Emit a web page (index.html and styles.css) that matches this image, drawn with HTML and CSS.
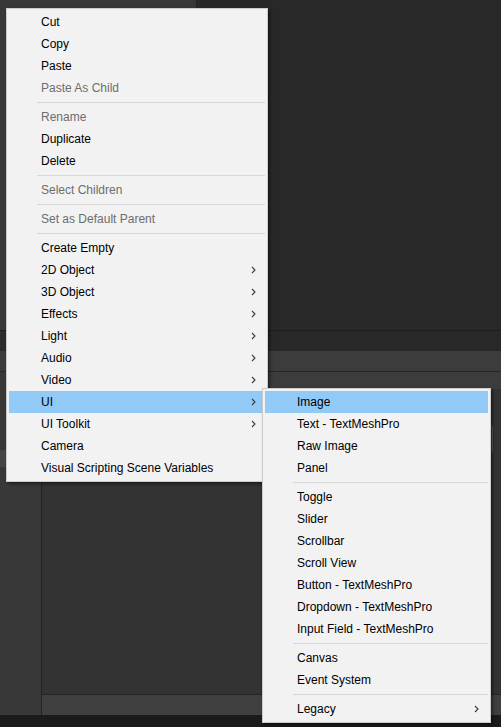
FILE: index.html
```html
<!DOCTYPE html>
<html>
<head>
<meta charset="utf-8">
<link rel="stylesheet" href="styles.css">
</head>
<body>
<div class="screen">
  <div class="top"><div class="hier"></div><div class="vline"></div><div class="scene"></div></div>
  <div class="hline"></div>
  <div class="tabs"><div class="tabs-left"></div><div class="tabs-right"></div></div>
  <div class="toolbar"></div>
  <div class="hline2"></div>
  <div class="lower">
    <div class="folders"><div class="folder-sel"></div></div>
    <div class="vline2"></div>
    <div class="assets">
      <div class="assets-head"></div>
      <div class="assets-body"><div class="field"></div></div>
      <div class="assets-line"></div>
      <div class="assets-foot"></div>
    </div>
  </div>
  <div class="status"></div>

  <ul class="menu main-menu">
    <li class="item"><span class="label">Cut</span></li>
    <li class="item"><span class="label">Copy</span></li>
    <li class="item"><span class="label">Paste</span></li>
    <li class="item disabled"><span class="label">Paste As Child</span></li>
    <li class="sep"></li>
    <li class="item disabled"><span class="label">Rename</span></li>
    <li class="item"><span class="label">Duplicate</span></li>
    <li class="item"><span class="label">Delete</span></li>
    <li class="sep"></li>
    <li class="item disabled"><span class="label">Select Children</span></li>
    <li class="sep"></li>
    <li class="item disabled"><span class="label">Set as Default Parent</span></li>
    <li class="sep"></li>
    <li class="item"><span class="label">Create Empty</span></li>
    <li class="item"><span class="label">2D Object</span><svg class="chev" viewBox="0 0 5 8"><polyline points="1,1 4,4 1,7"/></svg></li>
    <li class="item"><span class="label">3D Object</span><svg class="chev" viewBox="0 0 5 8"><polyline points="1,1 4,4 1,7"/></svg></li>
    <li class="item"><span class="label">Effects</span><svg class="chev" viewBox="0 0 5 8"><polyline points="1,1 4,4 1,7"/></svg></li>
    <li class="item"><span class="label">Light</span><svg class="chev" viewBox="0 0 5 8"><polyline points="1,1 4,4 1,7"/></svg></li>
    <li class="item"><span class="label">Audio</span><svg class="chev" viewBox="0 0 5 8"><polyline points="1,1 4,4 1,7"/></svg></li>
    <li class="item"><span class="label">Video</span><svg class="chev" viewBox="0 0 5 8"><polyline points="1,1 4,4 1,7"/></svg></li>
    <li class="item hl"><span class="label">UI</span><svg class="chev" viewBox="0 0 5 8"><polyline points="1,1 4,4 1,7"/></svg></li>
    <li class="item"><span class="label">UI Toolkit</span><svg class="chev" viewBox="0 0 5 8"><polyline points="1,1 4,4 1,7"/></svg></li>
    <li class="item"><span class="label">Camera</span></li>
    <li class="item"><span class="label">Visual Scripting Scene Variables</span></li>
  </ul>

  <ul class="menu sub-menu">
    <li class="item hl"><span class="label">Image</span></li>
    <li class="item"><span class="label">Text - TextMeshPro</span></li>
    <li class="item"><span class="label">Raw Image</span></li>
    <li class="item"><span class="label">Panel</span></li>
    <li class="sep"></li>
    <li class="item"><span class="label">Toggle</span></li>
    <li class="item"><span class="label">Slider</span></li>
    <li class="item"><span class="label">Scrollbar</span></li>
    <li class="item"><span class="label">Scroll View</span></li>
    <li class="item"><span class="label">Button - TextMeshPro</span></li>
    <li class="item"><span class="label">Dropdown - TextMeshPro</span></li>
    <li class="item"><span class="label">Input Field - TextMeshPro</span></li>
    <li class="sep"></li>
    <li class="item"><span class="label">Canvas</span></li>
    <li class="item"><span class="label">Event System</span></li>
    <li class="sep"></li>
    <li class="item"><span class="label">Legacy</span><svg class="chev" viewBox="0 0 5 8"><polyline points="1,1 4,4 1,7"/></svg></li>
  </ul>
</div>
</body>
</html>
```

FILE: styles.css
```css
html, body {
  margin: 0;
  padding: 0;
  background: #1b1b1b;
}

.screen {
  position: relative;
  width: 501px;
  height: 727px;
  overflow: hidden;
  display: grid;
  grid-template-rows: 330px 1px 20px 20px 1px 343px 12px;
  font-family: "Liberation Sans", Arial, sans-serif;
  font-size: 12px;
}

.top {
  display: grid;
  grid-template-columns: 196px 1px 1fr;
}
.hier { background: #383838; }
.vline { background: #232323; }
.scene { background: #282828; }

.hline { background: #1e1e1e; }

.tabs {
  display: grid;
  grid-template-columns: 196px 1fr;
}
.tabs-left { background: #2c2c2c; }
.tabs-right { background: #282828; }

.toolbar { background: #3c3c3c; }
.hline2 { background: #262626; }

.lower {
  display: grid;
  grid-template-columns: 41px 1px 1fr;
}
.folders {
  background: #383838;
  padding-top: 78px;
}
.folder-sel {
  height: 17px;
  background: #454545;
}
.vline2 { background: #232323; }

.assets {
  display: grid;
  grid-template-rows: 17px 1fr 1px 20px;
}
.assets-head { background: #3c3c3c; }
.assets-body {
  background: #333333;
  display: flex;
  align-items: flex-start;
  padding-top: 36px;
}
.field {
  margin-left: auto;
  margin-right: 8px;
  width: 200px;
  height: 26px;
  border: 1px solid #5e5e5e;
  border-radius: 3px;
  background: #3a3a3a;
}
.assets-line { background: #262626; }
.assets-foot { background: #404040; }

.status { background: #1b1b1b; }

/* Context menus */
.menu {
  position: absolute;
  box-sizing: border-box;
  margin: 0;
  padding: 2px;
  list-style: none;
  background: #f2f2f2;
  border: 1px solid #cccccc;
  box-shadow: 2px 2px 3px rgba(0, 0, 0, 0.45);
  color: #000;
}
.main-menu {
  left: 6px;
  top: 8px;
  width: 262px;
}
.sub-menu {
  left: 262px;
  top: 388px;
  width: 229px;
}

.item {
  display: flex;
  align-items: center;
  height: 22px;
  line-height: 22px;
  padding: 0 9px 0 32px;
  white-space: nowrap;
}
.item .label {
  flex: 1;
}
.item.disabled {
  color: #6d6d6d;
}
.item.hl {
  background: #91c9f7;
}

.chev {
  width: 5px;
  height: 8px;
  fill: none;
  stroke: #3a3a3a;
  stroke-width: 1.1;
}

.sep {
  height: 1px;
  margin: 3px 0 3px 28px;
  background: #d7d7d7;
}
```
